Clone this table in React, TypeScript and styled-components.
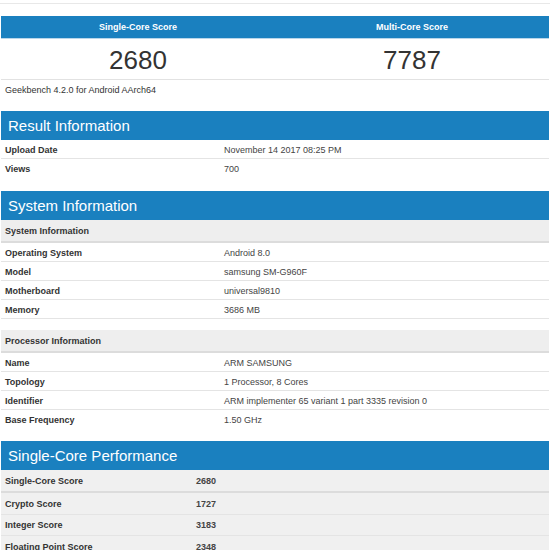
import React from "react";
import styled, { createGlobalStyle } from "styled-components";

const Global = createGlobalStyle`
  html, body { margin: 0; padding: 0; background: #fff; }
  body { font-family: "Liberation Sans", Arial, Helvetica, sans-serif; color: #333; }
`;

const BLUE = "#1a80bf";

const Page = styled.div`
  width: 550px;
  display: flex;
  flex-direction: column;
`;

const TopRule = styled.div`
  height: 3px;
  border-bottom: 1px solid #e8e8e8;
  margin-bottom: 12px;
`;

const ScoreGrid = styled.div`
  margin: 0 1px;
  display: grid;
  grid-template-columns: 1fr 1fr;
`;

const ScoreHead = styled.div`
  height: 23px;
  background: ${BLUE};
  color: #fff;
  font-size: 9px;
  font-weight: bold;
  display: flex;
  align-items: center;
  justify-content: center;
  border-bottom: 1px solid #b9d6ea;
  box-sizing: border-box;
`;

const ScoreValue = styled.div`
  height: 41px;
  font-size: 26px;
  color: #333;
  display: flex;
  align-items: center;
  justify-content: center;
  border-bottom: 1px solid #e2e2e2;
  box-sizing: border-box;
  padding-top: 2px;
`;

const Note = styled.div`
  height: 20px;
  line-height: 20px;
  font-size: 9px;
  color: #333;
  padding-left: 5px;
  margin-bottom: 11px;
`;

const Section = styled.section<{ $gap: number }>`
  margin: 0 1px ${(p) => p.$gap}px;
`;

const SectionHead = styled.h2`
  margin: 0;
  height: 29px;
  background: ${BLUE};
  color: #fff;
  font-size: 15px;
  font-weight: normal;
  display: flex;
  align-items: center;
  padding-left: 7px;
`;

const SubHead = styled.div`
  height: 23px;
  background: #eeeeee;
  border-bottom: 2px solid #dcdcdc;
  box-sizing: border-box;
  font-size: 9px;
  font-weight: bold;
  display: flex;
  align-items: center;
  padding-left: 4px;
  padding-top: 1px;
`;

const Row = styled.div<{ $split: string; $h: number; $shade?: boolean; $thick?: boolean }>`
  display: grid;
  grid-template-columns: ${(p) => p.$split} 1fr;
  height: ${(p) => p.$h}px;
  align-items: center;
  box-sizing: border-box;
  padding-top: 1px;
  background: ${(p) => (p.$shade ? "#f0f0f0" : "#fff")};
  border-bottom: ${(p) => (p.$thick ? "2px solid #dcdcdc" : "1px solid #e4e4e4")};
  &:last-child {
    border-bottom: none;
  }
  font-size: 9px;
`;

const Label = styled.div`
  font-weight: bold;
  color: #333;
  padding-left: 4px;
`;

const Value = styled.div<{ $bold?: boolean }>`
  color: #444;
  padding-left: 1px;
  font-weight: ${(p) => (p.$bold ? "bold" : "normal")};
`;

type KV = [string, string];

const InfoRows: React.FC<{ rows: KV[] }> = ({ rows }) => (
  <>
    {rows.map(([k, v]) => (
      <Row key={k} $split="222px" $h={19}>
        <Label>{k}</Label>
        <Value>{v}</Value>
      </Row>
    ))}
  </>
);

const result: KV[] = [
  ["Upload Date", "November 14 2017 08:25 PM"],
  ["Views", "700"],
];

const system: KV[] = [
  ["Operating System", "Android 8.0"],
  ["Model", "samsung SM-G960F"],
  ["Motherboard", "universal9810"],
  ["Memory", "3686 MB"],
];

const processor: KV[] = [
  ["Name", "ARM SAMSUNG"],
  ["Topology", "1 Processor, 8 Cores"],
  ["Identifier", "ARM implementer 65 variant 1 part 3335 revision 0"],
  ["Base Frequency", "1.50 GHz"],
];

const perf: KV[] = [
  ["Single-Core Score", "2680"],
  ["Crypto Score", "1727"],
  ["Integer Score", "3183"],
  ["Floating Point Score", "2348"],
];

const Spacer = styled.div<{ $h: number }>`
  height: ${(p) => p.$h}px;
`;

export default function App() {
  return (
    <Page>
      <Global />
      <TopRule />
      <ScoreGrid>
        <ScoreHead>Single-Core Score</ScoreHead>
        <ScoreHead>Multi-Core Score</ScoreHead>
        <ScoreValue>2680</ScoreValue>
        <ScoreValue>7787</ScoreValue>
      </ScoreGrid>
      <Note>Geekbench 4.2.0 for Android AArch64</Note>

      <Section $gap={13}>
        <SectionHead>Result Information</SectionHead>
        <InfoRows rows={result} />
      </Section>

      <Section $gap={12}>
        <SectionHead>System Information</SectionHead>
        <SubHead>System Information</SubHead>
        <InfoRows rows={system} />
        <Spacer $h={11} />
        <SubHead>Processor Information</SubHead>
        <InfoRows rows={processor} />
      </Section>

      <Section $gap={0}>
        <SectionHead>Single-Core Performance</SectionHead>
        {perf.map(([k, v], i) => (
          <Row key={k} $split="194px" $h={i === 0 ? 23 : 21.5} $shade $thick={i === 0}>
            <Label>{k}</Label>
            <Value $bold>{v}</Value>
          </Row>
        ))}
      </Section>
    </Page>
  );
}
